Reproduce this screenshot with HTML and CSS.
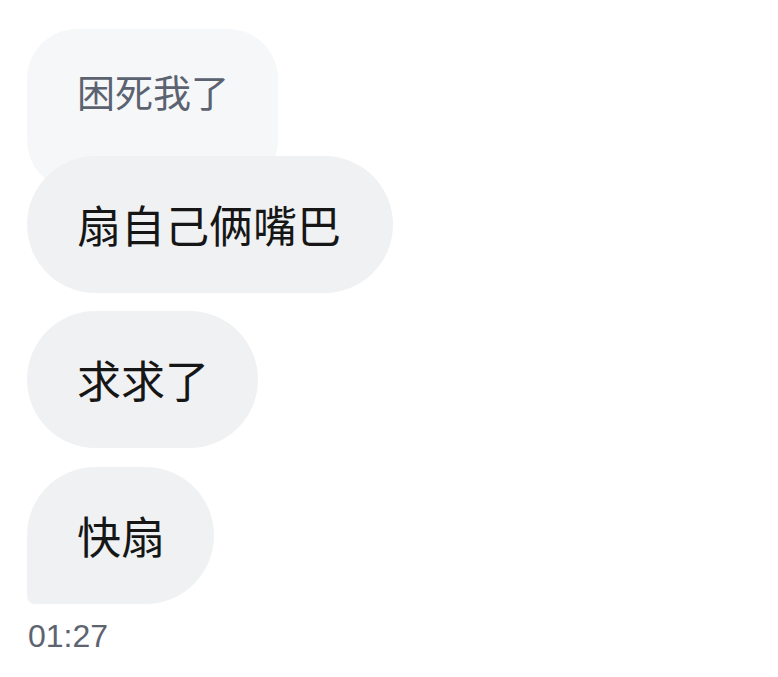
FILE: index.html
```html
<!DOCTYPE html>
<html lang="zh-CN">
<head>
    <meta charset="UTF-8">
    <meta name="viewport" content="width=device-width, initial-scale=1.0">
    <title>聊天</title>
    <link rel="stylesheet" href="styles.css">
</head>
<body>
    <div class="chat">
        <div class="bubble quoted">困死我了</div>
        <div class="bubble reply">扇自己俩嘴巴</div>
        <div class="bubble">求求了</div>
        <div class="bubble last">快扇</div>
        <div class="time">01:27</div>
    </div>
</body>
</html>
```

FILE: styles.css
```css
body {
    margin: 0;
    background: #ffffff;
    font-family: "Noto Sans CJK SC", "Liberation Sans", sans-serif;
}
.chat {
    display: flex;
    flex-direction: column;
    align-items: flex-start;
    gap: 18px;
    padding: 29px 0 0 27px;
}
.bubble {
    position: relative;
    background: #eff1f3;
    color: #161616;
    font-size: 44px;
    line-height: 52px;
    padding: 42px 49px 43px 50px;
    border-radius: 69px;
}
.quoted {
    background: #f6f7f9;
    color: #5b6270;
    font-size: 38px;
    line-height: 46px;
    padding: 39px 49px 76px 50px;
    border-radius: 50px;
}
.reply {
    margin-top: -52px;
    padding-right: 52px;
}
.last {
    margin-top: 1px;
    border-radius: 69px 69px 69px 8px;
}
.time {
    margin-top: -4px;
    margin-left: 1px;
    font-family: "Liberation Sans", sans-serif;
    font-size: 32px;
    color: #5d6470;
}
```
